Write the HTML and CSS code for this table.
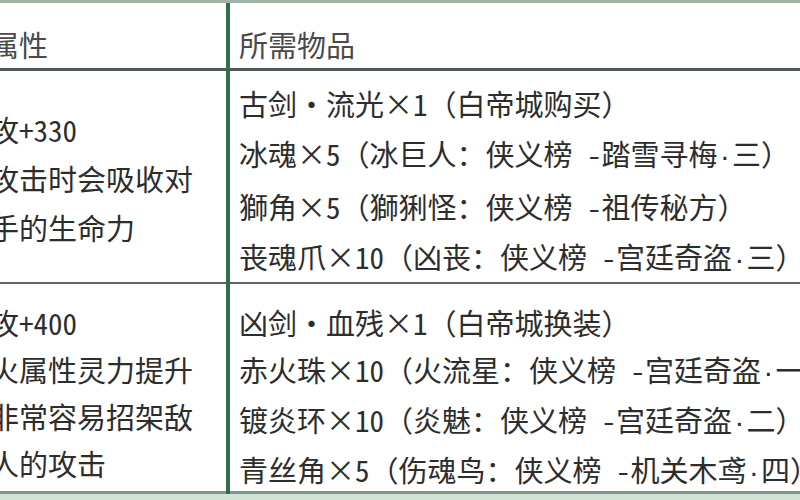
FILE: index.html
```html
<!DOCTYPE html>
<html lang="zh-CN">
<head>
<meta charset="utf-8">
<link rel="stylesheet" href="styles.css">
</head>
<body>
<div class="frame">
  <div class="sheet">
    <div class="cell left head"><div class="ln">属性</div></div>
    <div class="cell right head"><div class="ln">所需物品</div></div>
    <div class="hline h1"></div>

    <div class="cell left r1">
      <div class="ln">攻+330</div>
      <div class="ln">攻击时会吸收对</div>
      <div class="ln">手的生命力</div>
    </div>
    <div class="cell right r1">
      <div class="ln">古剑・流光<span class="x">×</span>1（白帝城购买）</div>
      <div class="ln">冰魂<span class="x">×</span>5（冰巨人：侠义榜 -踏雪寻梅<span class="dot">·</span>三）</div>
      <div class="ln">獅角<span class="x">×</span>5（獅猁怪：侠义榜 -祖传秘方）</div>
      <div class="ln">丧魂爪<span class="x">×</span>10（凶丧：侠义榜 -宫廷奇盗<span class="dot">·</span>三）</div>
    </div>
    <div class="hline h2"></div>

    <div class="cell left r2">
      <div class="ln">攻+400</div>
      <div class="ln">火属性灵力提升</div>
      <div class="ln">非常容易招架敌</div>
      <div class="ln">人的攻击</div>
    </div>
    <div class="cell right r2">
      <div class="ln">凶剑・血残<span class="x">×</span>1（白帝城换装）</div>
      <div class="ln">赤火珠<span class="x">×</span>10（火流星：侠义榜 -宫廷奇盗<span class="dot">·</span>一）</div>
      <div class="ln">镀炎环<span class="x">×</span>10（炎魅：侠义榜 -宫廷奇盗<span class="dot">·</span>二）</div>
      <div class="ln">青丝角<span class="x">×</span>5（伤魂鸟：侠义榜 -机关木鸢<span class="dot">·</span>四）</div>
    </div>
    <div class="hline h3"></div>

    <div class="vline"></div>
  </div>
</div>
</body>
</html>
```

FILE: styles.css
```css
html, body {
  margin: 0;
  padding: 0;
  background: #ffffff;
}
body {
  width: 800px;
  height: 500px;
  overflow: hidden;
  font-family: "Noto Sans Mono CJK SC", "Noto Sans CJK SC", "Noto Sans", sans-serif;
  color: #2d2d2d;
}
.frame {
  width: 800px;
  height: 500px;
  overflow: hidden;
  border-top: 3px solid #a2b4a6;
  box-sizing: border-box;
  background: #ffffff;
}
.sheet {
  margin-left: -14px;
  width: 1000px;
  display: grid;
  grid-template-columns: 240px 4px 1fr;
  grid-template-rows: 65px 3px 211px 2px 207px 3px 20px;
}
.cell {
  font-size: 29px;
  white-space: nowrap;
}
.left { grid-column: 1; padding-left: 4px; }
.right { grid-column: 3; padding-left: 9px; }
.head { grid-row: 1; line-height: 48px; padding-top: 17px; color: #4a4a4a; }
.r1 { grid-row: 3; }
.r2 { grid-row: 5; line-height: 47px; padding-top: 15px; }
.left.r1 { line-height: 49px; padding-top: 34px; }
.right.r1 { line-height: 50px; padding-top: 7px; }
.ln { display: block; }
.x {
  display: inline-block;
  width: 1em;
  text-align: center;
}
.dot {
  display: inline-block;
  width: 0.5em;
  text-align: center;
  font-family: "Liberation Sans", sans-serif;
}
.hline { grid-column: 1 / -1; }
.h1 { grid-row: 2; background: #4f5a53; }
.h2 { grid-row: 4; background: #5a6660; }
.h3 { grid-row: 6; background: #7f9886; }
.sheet::after {
  content: "";
  grid-column: 1 / -1;
  grid-row: 7;
  background: #d3e2d6;
}
.vline {
  grid-column: 2;
  grid-row: 1 / 7;
  background: #2f7049;
}
```
